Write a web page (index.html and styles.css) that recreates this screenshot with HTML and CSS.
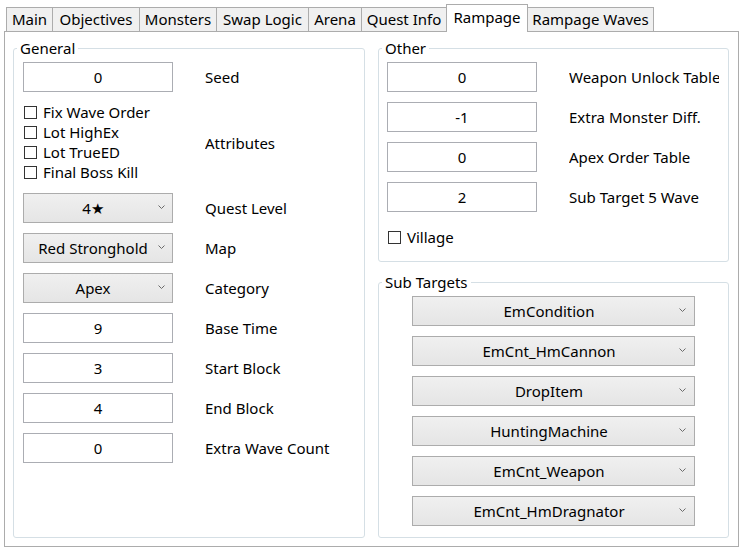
FILE: index.html
```html
<!DOCTYPE html>
<html>
<head>
<meta charset="utf-8">
<link rel="stylesheet" href="styles.css">
</head>
<body>
<div class="tabs">
  <div class="tab w-main">Main</div>
  <div class="tab w-obj">Objectives</div>
  <div class="tab w-mon">Monsters</div>
  <div class="tab w-swap">Swap Logic</div>
  <div class="tab w-arena">Arena</div>
  <div class="tab w-qi">Quest Info</div>
  <div class="tab selected w-ramp">Rampage</div>
  <div class="tab last w-rw">Rampage Waves</div>
</div>
<div class="panel">
  <fieldset class="group general">
    <legend>General</legend>
    <div class="form form-l">
      <div class="tb">0</div><div class="lbl">Seed</div>
      <div class="checks">
        <div class="chk"><span class="box"></span>Fix Wave Order</div>
        <div class="chk"><span class="box"></span>Lot HighEx</div>
        <div class="chk"><span class="box"></span>Lot TrueED</div>
        <div class="chk"><span class="box"></span>Final Boss Kill</div>
      </div><div class="lbl">Attributes</div>
      <div class="combo"><span class="ctext">4★</span><svg class="arrow" width="7" height="4" viewBox="0 0 7 4"><polyline points="0.5,0.5 3.5,3.5 6.5,0.5" fill="none" stroke="#6a6a6a" stroke-width="1"/></svg></div><div class="lbl">Quest Level</div>
      <div class="combo"><span class="ctext">Red Stronghold</span><svg class="arrow" width="7" height="4" viewBox="0 0 7 4"><polyline points="0.5,0.5 3.5,3.5 6.5,0.5" fill="none" stroke="#6a6a6a" stroke-width="1"/></svg></div><div class="lbl">Map</div>
      <div class="combo"><span class="ctext">Apex</span><svg class="arrow" width="7" height="4" viewBox="0 0 7 4"><polyline points="0.5,0.5 3.5,3.5 6.5,0.5" fill="none" stroke="#6a6a6a" stroke-width="1"/></svg></div><div class="lbl">Category</div>
      <div class="tb">9</div><div class="lbl">Base Time</div>
      <div class="tb">3</div><div class="lbl">Start Block</div>
      <div class="tb">4</div><div class="lbl">End Block</div>
      <div class="tb">0</div><div class="lbl">Extra Wave Count</div>
    </div>
  </fieldset>
  <div class="rightcol">
    <fieldset class="group other">
      <legend>Other</legend>
      <div class="form form-r">
        <div class="tb">0</div><div class="lbl">Weapon Unlock Table</div>
        <div class="tb">-1</div><div class="lbl">Extra Monster Diff.</div>
        <div class="tb">0</div><div class="lbl">Apex Order Table</div>
        <div class="tb">2</div><div class="lbl">Sub Target 5 Wave</div>
        <div class="chk village"><span class="box"></span>Village</div>
      </div>
    </fieldset>
    <fieldset class="group subs">
      <legend>Sub Targets</legend>
      <div class="sublist">
        <div class="combo wide"><span class="ctext">EmCondition</span><svg class="arrow" width="7" height="4" viewBox="0 0 7 4"><polyline points="0.5,0.5 3.5,3.5 6.5,0.5" fill="none" stroke="#6a6a6a" stroke-width="1"/></svg></div>
        <div class="combo wide"><span class="ctext">EmCnt_HmCannon</span><svg class="arrow" width="7" height="4" viewBox="0 0 7 4"><polyline points="0.5,0.5 3.5,3.5 6.5,0.5" fill="none" stroke="#6a6a6a" stroke-width="1"/></svg></div>
        <div class="combo wide"><span class="ctext">DropItem</span><svg class="arrow" width="7" height="4" viewBox="0 0 7 4"><polyline points="0.5,0.5 3.5,3.5 6.5,0.5" fill="none" stroke="#6a6a6a" stroke-width="1"/></svg></div>
        <div class="combo wide"><span class="ctext">HuntingMachine</span><svg class="arrow" width="7" height="4" viewBox="0 0 7 4"><polyline points="0.5,0.5 3.5,3.5 6.5,0.5" fill="none" stroke="#6a6a6a" stroke-width="1"/></svg></div>
        <div class="combo wide"><span class="ctext">EmCnt_Weapon</span><svg class="arrow" width="7" height="4" viewBox="0 0 7 4"><polyline points="0.5,0.5 3.5,3.5 6.5,0.5" fill="none" stroke="#6a6a6a" stroke-width="1"/></svg></div>
        <div class="combo wide"><span class="ctext">EmCnt_HmDragnator</span><svg class="arrow" width="7" height="4" viewBox="0 0 7 4"><polyline points="0.5,0.5 3.5,3.5 6.5,0.5" fill="none" stroke="#6a6a6a" stroke-width="1"/></svg></div>
      </div>
    </fieldset>
  </div>
</div>
</body>
</html>
```
FILE: styles.css
```css
* { box-sizing: border-box; }
html, body { margin: 0; padding: 0; background: #ffffff; }
body {
  font-family: "Noto Sans", "Open Sans", sans-serif;
  font-size: 15px;
  color: #000;
  width: 745px;
  height: 553px;
  overflow: hidden;
}
.tabs {
  display: flex;
  align-items: flex-end;
  height: 27px;
  margin-top: 4px;
  padding-left: 6px;
  position: relative;
  z-index: 2;
}
.tab {
  height: 24px;
  line-height: 22px;
  background: #f0f0f0;
  border: 1px solid #acacac;
  border-right: none;
  border-bottom: none;
  text-align: center;
  white-space: nowrap;
}
.tab.last { border-right: 1px solid #acacac; }
.tab.selected {
  height: 28px;
  line-height: 24px;
  background: #ffffff;
  margin-bottom: -1px;
  border-right: 1px solid #acacac;
}
.tab.selected + .tab { border-left: none; }
.w-main { width: 46px; }
.w-obj { width: 87px; }
.w-mon { width: 77px; }
.w-swap { width: 92px; }
.w-arena { width: 53px; }
.w-qi { width: 85px; }
.w-ramp { width: 82px; }
.w-rw { width: 126px; }

.panel {
  margin-left: 4px;
  width: 735px;
  height: 516px;
  border: 1px solid #acacac;
  padding: 8px 0 8px 8px;
  display: grid;
  grid-template-columns: 352px 351px;
  column-gap: 13px;
}
.group {
  margin: 0;
  min-width: 0;
  border: 1px solid #d5dfe5;
  border-radius: 3px;
}
.group legend {
  line-height: 16px;
  padding: 0 3px 0 3px;
  margin-left: -5px;
}
.subs legend { margin-left: 3px; }
.general { padding: 6px 9px 0 9px; }
.general legend { margin-left: -6px; }
.form {
  display: grid;
  grid-template-columns: 150px 150px;
  column-gap: 32px;
  row-gap: 10px;
  grid-auto-rows: 30px;
  align-items: center;
}
.form-l { grid-template-rows: 30px 81px; }
.form .checks { height: 81px; display: flex; flex-direction: column; }
.tb {
  height: 30px;
  border: 1px solid #abadb3;
  background: #fff;
  display: flex;
  align-items: center;
  justify-content: center;
}
.lbl { white-space: nowrap; overflow: hidden; }
.chk {
  display: flex;
  align-items: center;
  height: 20px;
  white-space: nowrap;
}
.box {
  width: 13px;
  height: 13px;
  border: 1px solid #333;
  background: #fff;
  margin-left: 1px;
  margin-right: 6px;
  flex: none;
}
.combo {
  height: 30px;
  border: 1px solid #acacac;
  background: linear-gradient(#f0f0f0, #e5e5e5);
  display: flex;
  align-items: center;
  padding-right: 7px;
}
.combo .ctext { flex: 1; text-align: center; padding-left: 4px; white-space: nowrap; }
.combo .arrow { flex: none; margin-top: -3px; }
.rightcol {
  display: flex;
  flex-direction: column;
  gap: 12px;
  min-height: 0;
}
.other { padding: 6px 8px 9px 8px; }
.form-r { grid-template-columns: 150px 150px; }
.village { grid-column: 1 / span 2; }
.subs { flex: 1; padding: 6px 0 0 0; }
.sublist {
  display: flex;
  flex-direction: column;
  align-items: center;
  gap: 10px;
}
.combo.wide { width: 283px; padding-right: 8px; }
.combo.wide .ctext { padding-left: 6px; }
```
